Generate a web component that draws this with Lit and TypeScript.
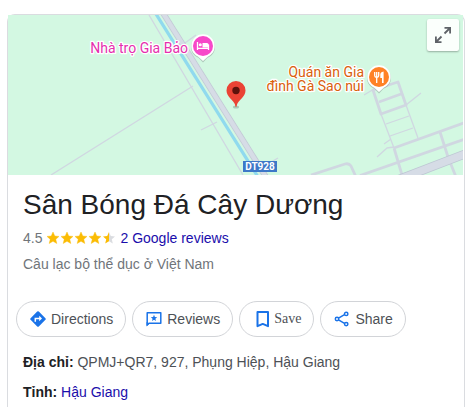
import { LitElement, html, svg, css } from "lit";
import { customElement } from "lit/decorators.js";

const STAR = "M7 1l1.8 4 4.2.4-3.2 2.9 1 4.2L7 10.3l-3.8 2.2 1-4.2L1 5.4 5.2 5z";

@customElement("place-map")
class PlaceMap extends LitElement {
  static styles = css`
    :host {
      display: block;
      position: relative;
      height: 160px;
      background: #d3f8e2;
    }
    .canvas {
      display: block;
      width: 100%;
      height: 100%;
    }
    .road {
      fill: none;
      stroke: #d0d7e1;
      stroke-linejoin: round;
    }
    .thin {
      stroke-width: 1.3;
    }
    .mid {
      stroke-width: 2.8;
    }
    .edge {
      stroke: #c3cad6;
      stroke-width: 6;
    }
    .main {
      stroke: #d6dce6;
      stroke-width: 4.4;
    }
    .wide-edge {
      stroke: #bdc6d3;
      stroke-width: 9;
    }
    .wide {
      stroke: #d6dce6;
      stroke-width: 7.4;
    }
    .canal {
      fill: none;
      stroke: #90daee;
      stroke-width: 3.2;
    }
    .poi {
      font: 14px Roboto, sans-serif;
      text-anchor: end;
      paint-order: stroke;
      stroke: #fff;
      stroke-width: 2.5px;
      stroke-linejoin: round;
    }
    .hotel {
      fill: #e52fae;
    }
    .food {
      fill: #d9600c;
    }
    .shield {
      font: bold 10px Roboto, sans-serif;
      fill: #fff;
      text-anchor: middle;
    }
    .expand {
      position: absolute;
      top: 4px;
      right: 4px;
      width: 32px;
      height: 32px;
      padding: 0;
      border: 0;
      border-radius: 2px;
      background: #fbfffc;
      box-shadow: 0 1px 2px rgba(0, 0, 0, 0.3);
      cursor: pointer;
    }
    .expand svg {
      display: block;
    }
  `;

  private badge(x: number, y: number, color: string, glyph: unknown) {
    return svg`<g transform="translate(${x} ${y})">
      <path d="M-4.500 10.800C-9 9-12 5-12 0a12 12 0 0 1 24 0c0 5-3 9-7.500 10.800L0 15.500z" fill="#8a9a94" opacity=".5" transform="translate(0 1)"/>
      <path d="M-5 10.500C-9 8.500-11.700 5-11.700 0a11.700 11.700 0 0 1 23.400 0c0 5-2.700 8.500-6.700 10.500L0 15z" fill="#fff"/>
      <circle r="10" fill=${color}/>
      ${glyph}
    </g>`;
  }

  render() {
    return html`
      <svg class="canvas" viewBox="8 15 455 160" preserveAspectRatio="xMidYMid slice">
        <g class="road thin">
          <path d="M149 15L243 175M51 175L193 86M201 130l16-8M185 43l11-8M266 165l12-7" />
          <path d="M406 105l15-12M386 124l23-8M390 136l23-8M364 95l10-6M384 144l7-5M377 157l10-9 7-1M398 82l8 23 12 33M381 114l13 34" />
        </g>
        <path class="canal" d="M156 14L258 177" />
        <path class="road edge" d="M163 13L266 177" />
        <path class="road main" d="M163 13L266 177" />
        <g class="road mid">
          <path d="M311 175l34-11q4-1 6 2l5 11" />
          <path d="M402 175l-8-27M381 114l-8-24 25-8 8 23zM379 102l22-8M394 148l70-25M360 175.500l104-36M440 132l8 25M450 162l6 15" />
        </g>
        <path class="road wide-edge" d="M392 182l73-28" />
        <path class="road wide" d="M392 182l73-28" />
        <text class="poi hotel" x="188" y="53">Nhà trọ Gia Bảo</text>
        <text class="poi food"><tspan x="364" y="77">Quán ăn Gia</tspan><tspan x="364" y="91">đình Gà Sao núi</tspan></text>
        ${this.badge(203, 46, "#f748c9", svg`
          <path d="M-5.500-4v8M-5.500 2.300h11M5.500 4V-1.500" stroke="#fff" stroke-width="1.300" fill="none"/>
          <circle cx="-2.700" cy="-1.200" r="1.500" fill="#fff"/>
          <path d="M-.5-3H4a1.500 1.500 0 0 1 1.500 1.500V1.500h-6z" fill="#fff"/>`)}
        ${this.badge(379, 77, "#ff8126", svg`
          <path d="M-4.300-5v3.200Q-4.300.2-2.300.2T-.3-1.800V-5M-2.300-5V6" stroke="#fff" stroke-width="1.300" fill="none"/>
          <path d="M4.600-5.500V6H3V1H1.300v-3.500q0-2.500 3.300-3z" fill="#fff"/>`)}
        <ellipse cx="236" cy="107" rx="3" ry="1.500" fill="#a9c9b6" />
        <path d="M236 107c-.6 0-.8-1.500-1.200-3-1.300-3.800-8.300-7.500-8.300-13.600a9.500 9.500 0 0 1 19 0c0 6.100-7 9.800-8.300 13.600-.4 1.500-.6 3-1.200 3z" fill="#ea4335" />
        <circle cx="236" cy="90.500" r="3.700" fill="#5c120c" />
        <rect x="243" y="161" width="34" height="11" fill="#3d78c8" />
        <text class="shield" x="260" y="170">DT928</text>
      </svg>
      <button class="expand" aria-label="Expand map">
        <svg width="32" height="32" viewBox="0 0 32 32" fill="none" stroke="#5f6368" stroke-width="1.800">
          <path d="M17.500 8.900h5.600v5.600M23 9l-5.500 5.500M14.500 23.100H8.900v-5.600M9 23l5.500-5.500" />
        </svg>
      </button>
    `;
  }
}

@customElement("app-root")
class AppRoot extends LitElement {
  static styles = css`
    :host {
      display: flex;
      box-sizing: border-box;
      min-height: 100vh;
      padding: 14px 7px 0;
      background: #fff;
      color: #4d5156;
      font: 14px/20px "Liberation Sans", Arial, sans-serif;
    }
    .card {
      flex: 1;
      min-width: 0;
      border: 1px solid #dadce0;
      border-bottom: 0;
      border-radius: 8px 8px 0 0;
    }
    place-map {
      margin-right: 1px;
    }
    .summary {
      padding: 12px 15px 0;
    }
    h1 {
      margin: 0;
      color: #202124;
      font-size: 28px;
      line-height: 36px;
      font-weight: 400;
    }
    .rating {
      display: flex;
      align-items: center;
      margin-top: 5px;
      color: #70757a;
    }
    .stars {
      margin: 0 4px;
    }
    .kind {
      margin: 6px 0 0;
      color: #70757a;
    }
    a {
      color: #1a0dab;
      text-decoration: none;
    }
    .actions {
      display: flex;
      flex-wrap: wrap;
      gap: 6px;
      padding: 27px 8px 0;
    }
    .pill {
      display: flex;
      align-items: center;
      gap: 5px;
      height: 36px;
      padding: 0 12px 0 13px;
      border: 1px solid #d2d4d8;
      border-radius: 18px;
      background: #fff;
      color: #4d5156;
      font: inherit;
      cursor: pointer;
    }
    .pill svg {
      display: block;
    }
    .serif {
      font-family: "Liberation Serif", "Times New Roman", serif;
    }
    .facts {
      margin: 0;
      padding: 15px 15px 5px;
    }
    .fact {
      margin-bottom: 10px;
    }
    dt,
    dd {
      display: inline;
      margin: 0;
    }
    dt {
      color: #202124;
      font-weight: 700;
    }
  `;

  render() {
    return html`
      <article class="card">
        <place-map></place-map>
        <div class="summary">
          <h1>Sân Bóng Đá Cây Dương</h1>
          <div class="rating">
            <span>4.5</span>
            <svg class="stars" width="70" height="14" viewBox="0 0 70 14" role="img" aria-label="4.5 out of 5">
              <defs>
                <linearGradient id="half">
                  <stop offset="50%" stop-color="#fbbc04" />
                  <stop offset="50%" stop-color="#dadce0" />
                </linearGradient>
              </defs>
              ${[0, 1, 2, 3, 4].map(
                (i) => svg`<path d=${STAR} transform="translate(${i * 14} 0)" fill=${i < 4 ? "#fbbc04" : "url(#half)"} stroke=${i < 4 ? "#fbbc04" : "none"} stroke-width=".4"/>`
              )}
            </svg>
            <a href="#reviews">2 Google reviews</a>
          </div>
          <p class="kind">Câu lạc bộ thể dục ở Việt Nam</p>
        </div>
        <div class="actions">
          <button class="pill">
            <svg width="16" height="16" viewBox="0 0 16 16">
              <path d="M7.200.6L.6 7.200a1.100 1.100 0 0 0 0 1.600l6.600 6.600a1.100 1.100 0 0 0 1.600 0l6.600-6.600a1.100 1.100 0 0 0 0-1.600L8.800.6a1.100 1.100 0 0 0-1.600 0z" fill="#1a73e8" />
              <path d="M5.300 10.800V7.500h5" fill="none" stroke="#fff" stroke-width="1.500" />
              <path d="M9.200 4.700L12 7.500l-2.800 2.800z" fill="#fff" />
            </svg>
            Directions
          </button>
          <button class="pill">
            <svg width="16" height="16" viewBox="0 0 16 16">
              <path d="M1.200 14V1.700h13.600v10.600H3z" fill="none" stroke="#1a73e8" stroke-width="1.500" stroke-linejoin="round" />
              <path d="M.5 15.500V11l3 1.500z" fill="#1a73e8" />
              <path d="M8 3.800l.9 2.200 2.300.2-1.800 1.500.6 2.300-2-1.200-2 1.200.6-2.300-1.800-1.500L7.100 6z" fill="#1a73e8" />
            </svg>
            Reviews
          </button>
          <button class="pill serif">
            <svg width="16" height="18" viewBox="0 0 16 18">
              <path d="M4.500 1.900H15v14.300L9.750 13.900 4.500 16.200z" fill="none" stroke="#1a73e8" stroke-width="2" stroke-linejoin="round" />
            </svg>
            Save
          </button>
          <button class="pill">
            <svg width="16" height="16" viewBox="0 0 16 16" fill="none" stroke="#1a73e8" stroke-width="1.500">
              <path d="M4.500 7.200L10.500 3.700M4.500 8.800l6 3.500" />
              <circle cx="3" cy="8" r="1.700" />
              <circle cx="12.200" cy="2.900" r="1.700" />
              <circle cx="12.200" cy="13.100" r="1.700" />
            </svg>
            Share
          </button>
        </div>
        <dl class="facts">
          <div class="fact"><dt>Địa chỉ:</dt> <dd>QPMJ+QR7, 927, Phụng Hiệp, Hậu Giang</dd></div>
          <div class="fact"><dt>Tỉnh:</dt> <dd><a href="#hau-giang">Hậu Giang</a></dd></div>
        </dl>
      </article>
    `;
  }
}
